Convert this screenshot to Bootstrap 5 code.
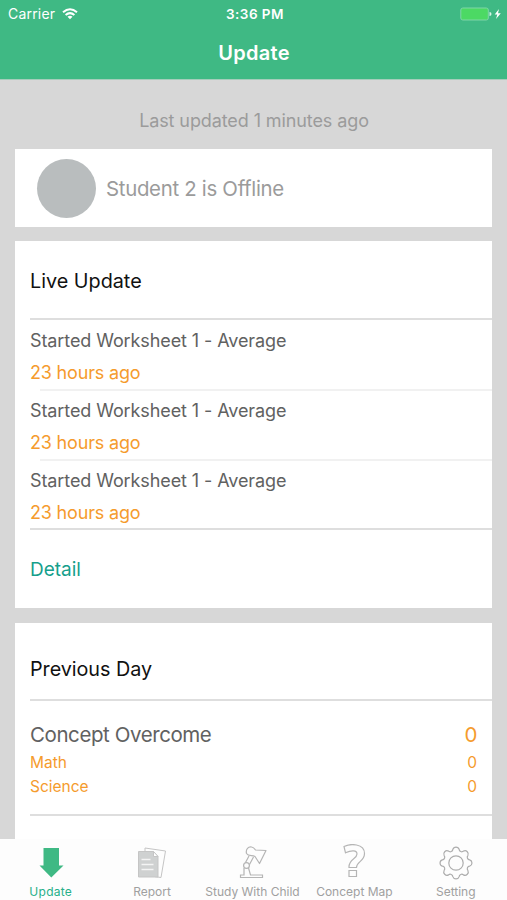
<!DOCTYPE html>
<html lang="en">
<head>
<meta charset="utf-8">
<meta name="viewport" content="width=device-width, initial-scale=1">
<title>Update</title>
<link href="https://cdn.jsdelivr.net/npm/bootstrap@5.3.0/dist/css/bootstrap.min.css" rel="stylesheet">
<style>
body{font-family:Inter,"Liberation Sans",sans-serif;background:#d7d7d7;color:#616161;line-height:1.2;height:900px}
.app-head{height:79px;background:#3fb984;color:#fff;box-shadow:0 1px 0 #a6cdbb}
.status{height:28px;font-size:14px;padding:0 5px 0 8px}
.status>*{flex:1 1 0}
.clock{font-weight:600;font-size:13.5px;letter-spacing:.45px}
.carrier{font-size:14px;letter-spacing:.2px;margin-right:7px}
.head-title{height:49px;font-size:20px;font-weight:600;letter-spacing:.3px;padding-left:1px}
.page{padding:0 15px}
.stamp{height:70px;padding:14px 0 0 1px;font-size:18px;letter-spacing:-.1px;color:#9b9b9b}
.panel{margin-bottom:14px}
.panel-live{margin-bottom:15px}
.person{height:78px;padding-left:22px;font-size:20.4px;letter-spacing:-.3px;color:#9b9b9b}
.person span{padding-top:2px}
.avatar{width:59px;height:59px;background:#b9bdbe;margin-right:10px}
.panel-title{height:79px;font-size:19.8px;color:#111;padding-top:4px}
.panel-title.day{height:78px;padding-top:18px;letter-spacing:-.05px}
.inset{margin-left:15px}
.rule{border-bottom:2px solid #dedede}
.entry{height:70px;padding-top:10px;font-size:18px;letter-spacing:-.1px}
.entry-time{color:#f59b2d;margin-top:10px;letter-spacing:-.18px}
.entry-line{height:2px;background:#f1f1f1;margin:6px 0 0 10px}
.detail{height:78px;font-size:19px;color:#169f8c;padding-top:3px}
.score{height:115px;padding:22px 15px 0 0;color:#f59b2d;font-size:15.5px}
.score-main{font-size:20.5px;letter-spacing:-.42px}
.score-main+div{margin-top:6px}
.score-main+div+div{margin-top:6px}
.score-name{color:#616161}
.tabs{height:61px;background:#fdfdfd;font-size:12px;color:#a0a0a0}
.tabs svg{width:36px;height:38px;display:block}
.tab{height:61px;padding:5px 2px 0 0;color:#a0a0a0;white-space:nowrap}
.tab:nth-child(-n+2){padding-right:0}
.tab:nth-child(n+4){padding-right:1px}
.tab.on{color:#27b08a}
.tab.on span{letter-spacing:.25px}
.tab span{line-height:16px;margin-top:2px}
</style>
</head>
<body class="d-flex flex-column overflow-hidden">
<header class="app-head flex-shrink-0">
  <div class="status d-flex align-items-center">
    <div class="d-flex align-items-center"><span class="carrier">Carrier</span>
      <svg width="16" height="12" viewBox="0 0 16 12" fill="none" stroke="#fff" stroke-width="2"><path d="M1 4.300Q8-1.800 15 4.300M3.600 7Q8 3.200 12.400 7"/><path d="M8 11.300 5.500 8.800Q8 6.800 10.500 8.800Z" fill="#fff" stroke="none"/></svg>
    </div>
    <div class="clock text-center">3:36 PM</div>
    <div class="d-flex justify-content-end align-items-center">
      <svg width="42" height="14" viewBox="0 0 42 14"><rect x=".8" y="1" width="27.500" height="12" rx="2" fill="#4cd964" stroke="#7fd6a8"/><path d="M29.500 5q2 0 2 2t-2 2z" fill="#d9f5e6"/><path d="M39 2 34.700 7.600h2.600L36 12l4.800-5.800H38z" fill="#fff"/></svg>
    </div>
  </div>
  <div class="head-title d-flex align-items-center justify-content-center"><span>Update</span></div>
</header>
<main class="page flex-grow-1 overflow-hidden">
  <div class="stamp d-flex align-items-center justify-content-center"><span>Last updated 1 minutes ago</span></div>
  <section class="panel person bg-white d-flex align-items-center">
    <div class="avatar rounded-circle"></div><span>Student 2 is Offline</span>
  </section>
  <section class="panel panel-live bg-white">
    <div class="inset">
      <div class="panel-title d-flex align-items-center rule">Live Update</div>
      <div class="entry"><div>Started Worksheet 1 - Average</div><div class="entry-time">23 hours ago</div><div class="entry-line"></div></div>
      <div class="entry"><div>Started Worksheet 1 - Average</div><div class="entry-time">23 hours ago</div><div class="entry-line"></div></div>
      <div class="entry rule"><div>Started Worksheet 1 - Average</div><div class="entry-time">23 hours ago</div></div>
      <div class="detail d-flex align-items-center">Detail</div>
    </div>
  </section>
  <section class="panel bg-white">
    <div class="inset">
      <div class="panel-title day d-flex align-items-center rule">Previous Day</div>
      <div class="rule score">
        <div class="d-flex justify-content-between score-main"><span class="score-name">Concept Overcome</span><span>0</span></div>
        <div class="d-flex justify-content-between"><span>Math</span><span>0</span></div>
        <div class="d-flex justify-content-between"><span>Science</span><span>0</span></div>
      </div>
      <div class="panel-title"></div>
    </div>
  </section>
</main>
<nav class="tabs row row-cols-5 g-0 flex-shrink-0">
  <a class="tab on col d-flex flex-column align-items-center text-decoration-none"><svg viewBox="0 0 36 38" fill="#3fb984"><path d="M10.500 4h15.500v17.500h4.500L18.300 33.500 6.500 21.500h4z"/></svg><span>Update</span></a>
  <a class="tab col d-flex flex-column align-items-center text-decoration-none"><svg viewBox="0 0 36 38" fill="none" stroke="#c5c5c5"><path d="M11 7.500V4l20.500 3-4.500 26.500-6-.8"/><path d="M4.500 7.500h15l4.500 5v20.500h-19.500z" fill="#cfd1d1"/><path d="M19.500 7.500v5H24z" fill="#fff"/><path d="M7.500 15.500h9M7.500 20.500h12M7.500 25.500h12" stroke="#f4f4f4" stroke-width="1.300"/></svg><span>Report</span></a>
  <a class="tab col d-flex flex-column align-items-center text-decoration-none"><svg viewBox="0 0 36 38" fill="none" stroke="#b5b5b5" stroke-width="1.200"><path d="M12.500 9.500C11.500 5 14.500 2.500 17.500 3c2 .3 3 1.500 4 3l10.500.5L25.500 19.500 21 12.500C18 11 14.500 12.500 12.500 9.500z" stroke-linejoin="round"/><path d="M15 12 11.500 18.500M19.500 13 15.500 20.500"/><circle cx="12.500" cy="21.500" r="2.900"/><path d="M10 24v7H6.500v2.500h22V31H16.500L14.500 24"/></svg><span>Study With Child</span></a>
  <a class="tab col d-flex flex-column align-items-center text-decoration-none"><svg viewBox="0 0 36 38" fill="none" stroke="#b5b5b5" stroke-width="1.200"><path d="M8 2.500C14-.6 28.500-.8 28.500 9.500c0 8-8 8-8 14h-7.500c-.5-8.500 8-8.500 8-13.500 0-4-5.500-4-11.500-1.200z"/><path d="M13 26.500h7.500v6H13z"/></svg><span>Concept Map</span></a>
  <a class="tab col d-flex flex-column align-items-center text-decoration-none"><svg viewBox="0 0 36 38" fill="none" stroke="#adadad" stroke-width="1.200"><path d="M14.850 5.360A3.300 3.300 0 0 1 21.150 5.360A2.600 2.600 0 0 0 25.420 7.130A3.300 3.300 0 0 1 29.870 11.580A2.600 2.600 0 0 0 31.640 15.850A3.300 3.300 0 0 1 31.640 22.150A2.600 2.600 0 0 0 29.870 26.420A3.300 3.300 0 0 1 25.420 30.870A2.600 2.600 0 0 0 21.150 32.640A3.300 3.300 0 0 1 14.850 32.640A2.600 2.600 0 0 0 10.580 30.870A3.300 3.300 0 0 1 6.130 26.420A2.600 2.600 0 0 0 4.360 22.150A3.300 3.300 0 0 1 4.360 15.850A2.600 2.600 0 0 0 6.130 11.580A3.300 3.300 0 0 1 10.580 7.130A2.600 2.600 0 0 0 14.850 5.360Z"/><circle cx="18" cy="19" r="7.200"/></svg><span>Setting</span></a>
</nav>
<script src="https://cdn.jsdelivr.net/npm/bootstrap@5.3.0/dist/js/bootstrap.bundle.min.js"></script>
</body>
</html>
